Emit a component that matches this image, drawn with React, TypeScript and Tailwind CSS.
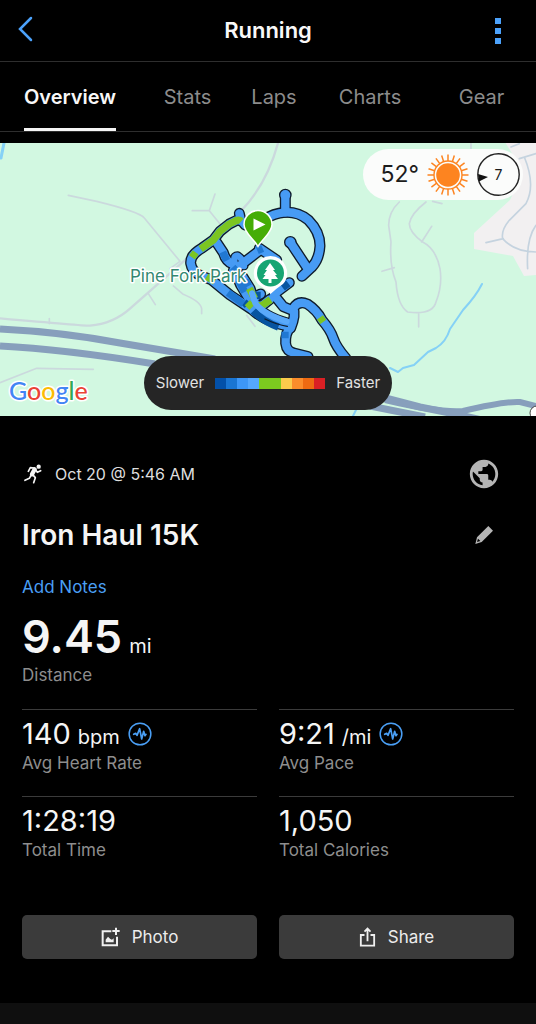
import type { ReactNode } from "react";
import { MdPublic } from "react-icons/md";

const tabs = ["Overview", "Stats", "Laps", "Charts", "Gear"];

const paceScale = [
  "bg-[#0350a8]",
  "bg-[#1a75d2]",
  "bg-[#3d97f7]",
  "bg-[#55a8fd]",
  "bg-[#7ccb1f]",
  "bg-[#7ccb1f]",
  "bg-[#fbcb4c]",
  "bg-[#fb8d2b]",
  "bg-[#ee6a12]",
  "bg-[#da2024]",
];

const routeLines = [
  "M285 118Q310 100 345 97Q385 95 415 120Q450 155 450 197Q448 238 425 262L396 289",
  "M346 97V48",
  "M361 187L412 264",
  "M212 118L208 100",
  "M225 135Q215 118 200 121L178 132L150 154L130 180L95 205Q60 225 62 250Q66 275 90 286L125 300L180 345L245 388Q285 425 355 439",
  "M140 188L160 218Q168 245 188 252L200 270",
  "M200 268Q184 226 203 227Q220 238 222 258",
  "M190 272L268 212",
  "M268 205L320 240",
  "M195 275L212 315L236 355",
  "M218 290L240 325L255 370Q275 408 355 430",
  "M312 345L340 380L364 390",
  "M318 338L358 308",
  "M256 350L272 342",
  "M250 375L275 378L300 358",
  "M362 445Q378 405 370 385Q385 360 412 372Q440 390 456 420Q482 450 490 475Q498 500 528 535",
  "M362 440Q345 460 347 490Q350 515 372 519L414 530",
];

const greenLines = [
  "M214 124Q207 118 198 122L178 132L150 154L130 180L92 207",
  "M77 217L66 232",
  "M110 290L134 304",
  "M238 325L254 356",
  "M232 368L246 382M264 378L277 376L302 359",
  "M450 412L460 426",
];

function ActivityMap() {
  return (
    <svg
      viewBox="0 1 536 273"
      role="img"
      aria-label="Route map"
      preserveAspectRatio="xMidYMid slice"
      className="block w-full"
      fontFamily="Inter, sans-serif"
    >
      <rect y="0" width="536" height="275" fill="#d2f8e1" />
      {/* built-up area */}
      <path
        d="M505 0L516 18Q520 40 510 58L474 91V107L513 114L524 134L536 133V0Z"
        fill="#f2f0f1"
      />
      {/* minor roads */}
      <g fill="none" stroke="#cbd9dd" strokeLinejoin="round" strokeLinecap="round">
        <g transform="scale(.3333)" strokeWidth="5">
          <path d="M205 160L290 178Q420 210 433 228L540 358L510 380M520 432L548 456Q602 478 605 500V515M445 455L466 488M148 530V545M577 206H628L645 156M628 206L665 252M0 722L110 679L280 682M740 520L765 553" />
          <path d="M0 529Q260 552 270 551Q340 545 390 500L560 350L720 210Q800 130 835 0" strokeWidth="7" />
        </g>
        <g transform="translate(266 0) scale(.3333)" strokeWidth="5">
          <path d="M400 180Q368 210 368 250L375 300Q370 370 390 420Q395 490 425 510Q500 520 510 480Q530 430 522 380Q510 320 470 300Q430 270 430 245Q435 215 480 180M467 300L497 253M385 377L348 388M458 515V555M500 178L528 185M615 5V20" />
          <path d="M735 15L760 5M760 50L810 35M775 45Q810 130 780 185L730 235Q705 265 710 290Q745 330 810 330M712 290L660 302M810 250Q780 290 785 380" stroke="#c5d3df" />
        </g>
      </g>
      {/* creeks */}
      <g fill="none" stroke="#85d1f6" strokeLinejoin="round" strokeLinecap="round">
        <path d="M1 16L5 -4" strokeWidth="3" />
        <path d="M482 142Q476 154 463 168L450 187Q446 200 436 206L428 210L414 223L403 226L398 230L390 226M358 264L351 278" strokeWidth="2" />
      </g>
      {/* highway */}
      <g fill="none" stroke="#879fbc" strokeWidth="7">
        <path d="M0 187Q62 190 120 201L215 217" />
        <path d="M0 204Q62 207 155 222" />
        <path d="M370 252L420 265Q465 274 500 282M370 264L425 275" />
        <path d="M385 258Q440 271 463 269Q505 259 520 260L536 264" strokeWidth="6" />
      </g>
      {/* recorded route */}
      <g
        transform="translate(170 38) scale(.3333)"
        fill="none"
        strokeLinejoin="round"
        strokeLinecap="round"
      >
        <g stroke="#101c2c" strokeWidth="33">
          {routeLines.map((d) => (
            <path key={d} d={d} strokeWidth={d.startsWith("M200 268") ? 27 : undefined} />
          ))}
          <path d="M346 45V45M361 187V187" strokeWidth="38" />
        </g>
        <g stroke="#479bf4" strokeWidth="25">
          {routeLines.map((d) => (
            <path key={d} d={d} strokeWidth={d.startsWith("M200 268") ? 19 : undefined} />
          ))}
          <path d="M346 45V45M361 187V187" strokeWidth="30" />
        </g>
        <g strokeLinecap="butt" strokeWidth="22">
          <g stroke="#0754a0">
            <path d="M250 393Q280 425 325 441M255 346L272 346M222 366L232 376M338 323L355 310" />
          </g>
          <g stroke="#2178d2">
            <path d="M188 262L206 282M206 300L224 336M226 300L236 318M174 338L220 372M158 216L170 242M262 212L278 205M345 455V475" />
          </g>
          <g stroke="#7cc522">
            {greenLines.map((d) => (
              <path key={d} d={d} />
            ))}
          </g>
        </g>
        <path
          d="M246 340L256 370Q280 402 350 424"
          stroke="#5aa9fa"
          strokeWidth="18"
        />
        <path d="M285 417Q320 434 352 439" stroke="#101c2c" strokeWidth="4" />
      </g>
      {/* place label */}
      <text
        x="130"
        y="140"
        fontSize="17"
        fill="#338871"
        stroke="#ffffff"
        strokeWidth="3"
        strokeLinejoin="round"
        paintOrder="stroke"
      >
        Pine Fork Park
      </text>
      {/* park pin */}
      <path
        d="M270.500 114A17 17 0 0 0 258 142Q264 146 270.500 152Q277 146 283 142A17 17 0 0 0 270.500 114Z"
        fill="#ffffff"
      />
      <circle cx="270.500" cy="131" r="13.500" fill="#17a573" />
      <path
        d="M270 121L275 128H273L277 133H275L278 137H271.500V141H268.500V137H262.500L265.500 133H263.500L267 128H265Z"
        fill="#ffffff"
      />
      {/* start pin */}
      <path
        d="M258 104.500C254 97 244 91 244 82.500A14 14 0 0 1 272 82.500C272 91 262 97 258 104.500Z"
        fill="#45ad06"
        stroke="#ffffff"
        strokeWidth="1.500"
      />
      <path d="M253.500 76.500L265.500 82.500L253.500 88.500Z" fill="#ffffff" />
      <circle cx="537" cy="271" r="7" fill="#ffffff" stroke="#444" />
      {/* map provider mark */}
      <text
        x="9"
        y="258"
        fontSize="25"
        fontFamily="Lato, sans-serif"
        fontWeight="500"
        stroke="#ffffff"
        strokeWidth="3"
        strokeLinejoin="round"
        paintOrder="stroke"
      >
        <tspan fill="#4285f4">G</tspan>
        <tspan fill="#ea4335">o</tspan>
        <tspan fill="#fbbc05">o</tspan>
        <tspan fill="#4285f4">g</tspan>
        <tspan fill="#34a853">l</tspan>
        <tspan fill="#ea4335">e</tspan>
      </text>
    </svg>
  );
}

function SunIcon() {
  const rays = Array.from({ length: 20 }, (_, i) => i * 18);
  return (
    <svg viewBox="-21 -21 42 42" className="size-[42px]" aria-hidden="true">
      <circle r="11.800" fill="#fd8420" />
      <circle r="14" fill="none" stroke="#fd8420" strokeWidth="1.400" />
      {rays.map((a) => (
        <path
          key={a}
          d="M0 -14V-20.500"
          stroke="#fd8420"
          strokeWidth="1.500"
          transform={`rotate(${a})`}
        />
      ))}
    </svg>
  );
}

function WindDial() {
  return (
    <div className="relative grid size-[43px] place-items-center">
      <svg viewBox="0 0 43 43" className="absolute inset-0" aria-hidden="true">
        <circle cx="21.500" cy="21.500" r="20.700" fill="none" stroke="#242424" strokeWidth="1.400" />
        <path d="M1 21L11 24L2 28.500Z" fill="#111" />
      </svg>
      <span className="text-sm">7</span>
    </div>
  );
}

function RunnerIcon() {
  return (
    <svg viewBox="0 0 54 60" className="h-5 w-[18px]" aria-hidden="true">
      <circle cx="44" cy="8" r="6.500" fill="#f4f4f4" />
      <g fill="none" stroke="#f4f4f4" strokeLinecap="round" strokeLinejoin="round">
        <path d="M32 16L24 31" strokeWidth="13" />
        <path d="M30 12L19 11L13 22" strokeWidth="5" />
        <path d="M35 17L40 25L50 20" strokeWidth="5" />
        <path d="M26 32L34 41L29 56" strokeWidth="5" />
        <path d="M21 34L16 43L3 49" strokeWidth="5" />
      </g>
    </svg>
  );
}

function PulseIcon() {
  return (
    <svg viewBox="0 0 72 72" className="size-6" aria-hidden="true">
      <g fill="none" stroke="#4a9ff5" strokeLinejoin="round" strokeLinecap="round">
        <circle cx="36" cy="36" r="32.500" strokeWidth="4.500" />
        <path d="M17 37L23 34L27 40L35 20L41 51L47 28L51 41L54 37" strokeWidth="5" />
      </g>
    </svg>
  );
}

function PhotoIcon() {
  return (
    <svg viewBox="0 0 57 60" className="h-5 w-[19px]" aria-hidden="true">
      <path d="M31 13H5V55H48V29" fill="none" stroke="#f0f0f0" strokeWidth="6" />
      <path d="M45 2V24M34 12H56" stroke="#f0f0f0" strokeWidth="6" />
      <path d="M14 46V38L21 29L28 36L33 38L38 34V46Z" fill="#f0f0f0" />
    </svg>
  );
}

function ShareIcon() {
  return (
    <svg viewBox="0 0 50 60" className="h-5 w-[17px]" aria-hidden="true">
      <g fill="none" stroke="#f0f0f0" strokeWidth="5.500">
        <path d="M16 24H5V56H45V24H34" />
        <path d="M25 43V5M16 14L25 5L34 14" />
      </g>
    </svg>
  );
}

function Stat({ value, unit, label, zone }: { value: string; unit?: string; label: string; zone?: boolean }) {
  return (
    <div className="h-[87px] border-t border-[#3b3b3b] pt-[7px]">
      <div className="flex h-[34px] items-center gap-2">
        <p className="text-[29px] leading-[34px] text-[#f5f5f5]">
          {value}
          {unit && <span className="ml-[7px] text-xl">{unit}</span>}
        </p>
        {zone && (
          <button type="button" aria-label={`${label} chart`}>
            <PulseIcon />
          </button>
        )}
      </div>
      <p className="text-[17px] leading-6 text-[#8e8e8e]">{label}</p>
    </div>
  );
}

function ActionButton({ icon, children }: { icon: ReactNode; children: ReactNode }) {
  return (
    <button
      type="button"
      className="flex h-11 items-center justify-center gap-3 rounded-[5px] bg-[#3b3b3b] text-[17px] text-[#ececec]"
    >
      {icon}
      <span className="pt-px">{children}</span>
    </button>
  );
}

export default function App() {
  return (
    <div className="min-h-screen bg-black font-['Inter',sans-serif] text-white">
      <header className="grid h-[62px] grid-cols-[1fr_auto_1fr] items-center border-b border-[#2e2e2e] px-[18px]">
        <button type="button" aria-label="Back" className="justify-self-start">
          <svg viewBox="0 0 16 26" className="mb-1 h-[26px] w-4" aria-hidden="true">
            <path d="M13 2L2 13L13 24" fill="none" stroke="#4ca2fb" strokeWidth="2.500" strokeLinecap="round" />
          </svg>
        </button>
        <h1 className="text-[22px] font-semibold text-[#f8f8f8]">Running</h1>
        <button type="button" aria-label="More options" className="mr-[17px] grid gap-1 justify-self-end">
          <span className="size-[6px] bg-[#4ca2fb]" />
          <span className="size-[6px] bg-[#4ca2fb]" />
          <span className="size-[6px] bg-[#4ca2fb]" />
        </button>
      </header>

      <nav className="grid h-[70px] grid-cols-[140fr_95fr_78fr_114fr_109fr] justify-items-center border-b border-[#2e2e2e] text-xl">
        {tabs.map((tab, i) => (
          <a
            key={tab}
            href={`#${tab.toLowerCase()}`}
            aria-current={i === 0 ? "page" : undefined}
            className={
              i === 0
                ? "flex items-center border-b-[3px] border-[#f5f5f5] pt-1 font-semibold text-[#f8f8f8]"
                : "flex items-center pt-px text-[#8c8c8c]"
            }
          >
            {tab}
          </a>
        ))}
      </nav>

      <main>
        <section className="relative mt-[11px]">
          <ActivityMap />
          <div className="absolute top-[6px] right-[13px] flex h-[51px] items-center gap-2 rounded-full bg-[#fbfcfb] pr-[3px] pl-[18px] text-[#1c1c1c]">
            <span className="text-[23px]">52°</span>
            <SunIcon />
            <WindDial />
          </div>
          <div className="absolute inset-x-0 bottom-[6px] flex justify-center">
            <div className="flex h-[54px] items-center gap-[11px] rounded-full bg-[#252525] px-3 text-[15px] text-[#e2e2e2]">
              <span>Slower</span>
              <div className="flex h-[11px] w-[110px]">
                {paceScale.map((color, i) => (
                  <span key={i} className={`flex-1 ${color}`} />
                ))}
              </div>
              <span>Faster</span>
            </div>
          </div>
        </section>

        <section className="px-[22px] pt-[41px]">
          <div className="flex h-[34px] items-center">
            <div className="ml-[2px]">
              <RunnerIcon />
            </div>
            <p className="ml-[13px] text-base text-[#dedede]">Oct 20 @ 5:46 AM</p>
            <button type="button" aria-label="Privacy" className="mr-[13px] ml-auto">
              <MdPublic className="size-[34px] text-[#b5b5b5]" />
            </button>
          </div>

          <div className="mt-[26px] flex h-9 items-center justify-between">
            <h2 className="text-[28px] leading-9 font-semibold text-[#f5f5f5]">Iron Haul 15K</h2>
            <button type="button" aria-label="Edit name" className="mr-5">
              <svg viewBox="0 0 60 60" className="size-5" aria-hidden="true">
                <path
                  d="M4 57L9 37L43 3L57 17L23 51ZM12 41L9 51L19 48Z"
                  fill="#b5b5b5"
                  fillRule="evenodd"
                />
              </svg>
            </button>
          </div>

          <a href="#notes" className="mt-[22px] block text-[17px] leading-6 text-[#4a9ff5]">
            Add Notes
          </a>

          <div className="mt-3 text-[#f5f5f5]">
            <p className="text-[45px] leading-[52px] font-semibold">
              9.45<span className="ml-[7px] text-xl font-normal">mi</span>
            </p>
            <p className="text-[17px] leading-6 text-[#8e8e8e]">Distance</p>
          </div>

          <div className="mt-[22px] grid grid-cols-2 gap-x-[22px]">
            <Stat value="140" unit="bpm" label="Avg Heart Rate" zone />
            <Stat value="9:21" unit="/mi" label="Avg Pace" zone />
            <Stat value="1:28:19" label="Total Time" />
            <Stat value="1,050" label="Total Calories" />
          </div>

          <div className="mt-8 grid grid-cols-2 gap-x-[22px]">
            <ActionButton icon={<PhotoIcon />}>Photo</ActionButton>
            <ActionButton icon={<ShareIcon />}>Share</ActionButton>
          </div>
        </section>
        <div className="mt-11 h-[21px] bg-[#0f0f0f]" />
      </main>
    </div>
  );
}
